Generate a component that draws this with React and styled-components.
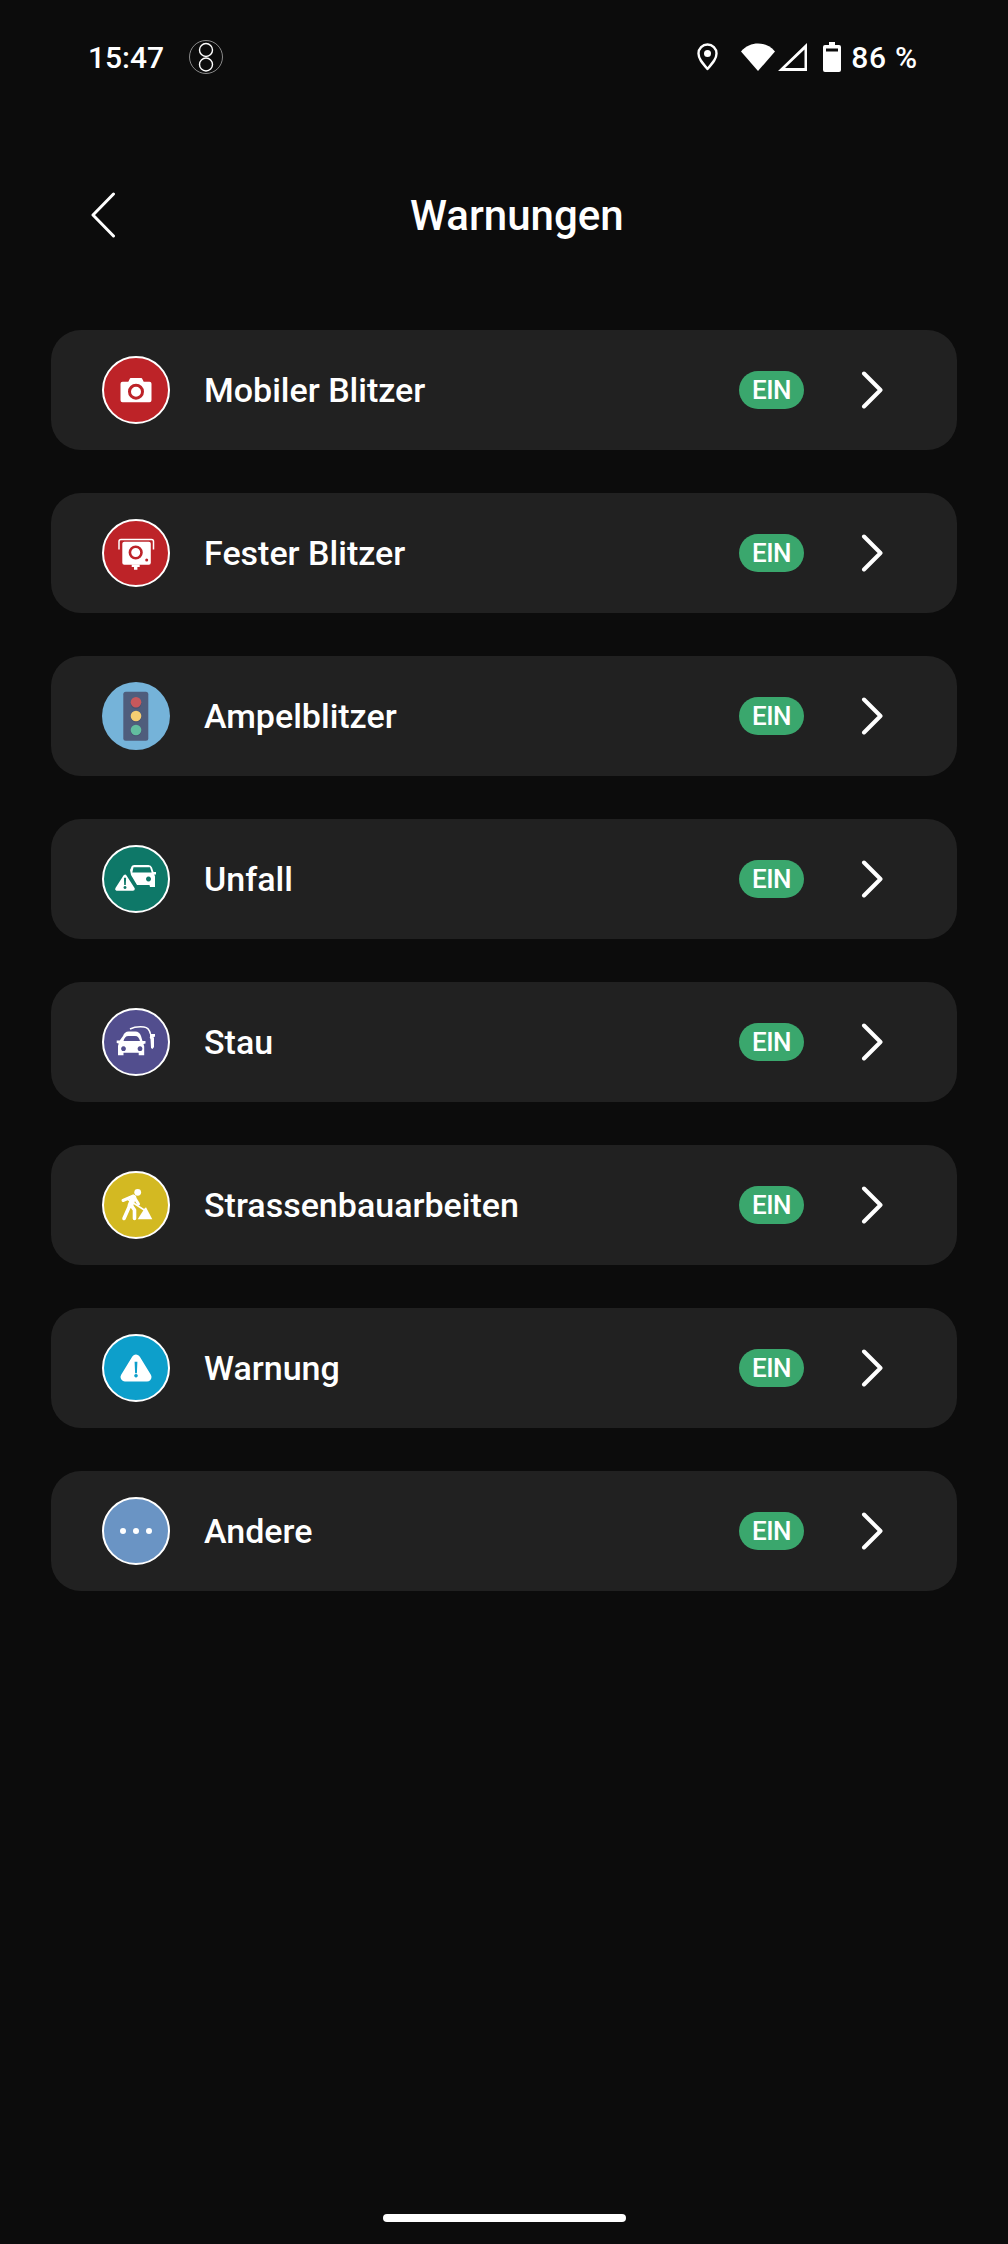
import React from 'react';
import styled, { createGlobalStyle } from 'styled-components';

const Global = createGlobalStyle`
  html, body { margin: 0; padding: 0; background: #0c0c0c; }
  body { font-family: Roboto, "Liberation Sans", sans-serif; color: #fff; }
`;

const Screen = styled.div`
  width: 1008px;
  height: 2244px;
  background: #0c0c0c;
  display: flex;
  flex-direction: column;
  overflow: hidden;
`;

const StatusBar = styled.div`
  height: 40px;
  margin-top: 37px;
  padding: 0 90px 0 88px;
  display: flex;
  align-items: center;
  justify-content: space-between;
  font-size: 30px;
  font-weight: 500;
`;

const StatusGroup = styled.div`
  display: flex;
  align-items: center;
`;

const Clock = styled.span`
  margin-right: 25px;
`;

const Percent = styled.span`
  letter-spacing: 0.8px;
`;

const StatusIcon = styled.svg`
  flex: none;
  margin-right: ${p => p.$after || 0}px;
`;

const Header = styled.div`
  height: 60px;
  margin-top: 108px;
  padding-left: 90px;
  display: flex;
  align-items: center;
  font-size: 42px;
  font-weight: 500;
`;

const BackIcon = styled.svg`
  flex: none;
  margin-right: 294px;
`;

const List = styled.div`
  margin: 85px 51px 0;
  display: flex;
  flex-direction: column;
  gap: 43px;
`;

const Row = styled.div`
  height: 120px;
  background: #212121;
  border-radius: 30px;
  display: flex;
  align-items: center;
  padding: 0 74px 0 51px;
`;

const Badge = styled.div`
  width: 68px;
  height: 68px;
  box-sizing: border-box;
  border-radius: 50%;
  background: ${p => p.$bg};
  border: ${p => (p.$plain ? 'none' : '2px solid #fff')};
  flex: none;
  overflow: hidden;
  display: flex;
`;

const Label = styled.span`
  margin-left: 34px;
  flex: 1;
  font-size: 34px;
  font-weight: 500;
`;

const Pill = styled.span`
  width: 65px;
  height: 38px;
  border-radius: 19px;
  background: #3aa76d;
  display: flex;
  align-items: center;
  justify-content: center;
  font-size: 26px;
  font-weight: 500;
  letter-spacing: -0.5px;
  margin-right: 57px;
`;

const HomeBar = styled.div`
  width: 243px;
  height: 8px;
  border-radius: 4px;
  background: #fff;
  margin: auto auto 22px;
`;

const W = '#fff';
const RED = '#bd2328';
const TEAL = '#0e7868';
const PURPLE = '#524e8e';

const Icons = {
  camera: (
    <svg width="64" height="64" viewBox="0 0 64 64">
      <path fill={W} d="M18.500 23.700h5.800l1.500-3a1 1 0 0 1 1-.7h10.400a1 1 0 0 1 1 .7l1.500 3h5.800a2 2 0 0 1 2 2v16.600a2 2 0 0 1-2 2H18.500a2 2 0 0 1-2-2V25.700a2 2 0 0 1 2-2z" />
      <circle cx="32" cy="33.700" r="6.500" fill="none" stroke={RED} strokeWidth="3" />
    </svg>
  ),
  fixed: (
    <svg width="64" height="64" viewBox="0 0 64 64">
      <path fill="none" stroke={W} strokeWidth="1.500" d="M15 28.500V20.500a2 2 0 0 1 2-2h30.500a2 2 0 0 1 2 2v8" />
      <rect x="18.300" y="20.800" width="28.500" height="23" rx="2" fill={W} />
      <circle cx="31.700" cy="31.500" r="5.800" fill="none" stroke={RED} strokeWidth="2.600" />
      <circle cx="42.700" cy="39" r="1.500" fill={RED} />
      <path fill={W} d="M27.700 43.500h8v2.500h-2.300v2.800h-3.400V46h-2.300z" />
    </svg>
  ),
  unfall: (
    <svg width="64" height="64" viewBox="0 0 64 64">
      <path fill={W} d="M27 21a3.500 3.500 0 0 1 3.500-3h14a4 4 0 0 1 3.500 2.500l1.500 4.500h2.500v2.500h-1.700l.7 2v10.500h-5l-.5-2H33l-6-10-1-5z" />
      <path fill={TEAL} d="M29.500 20.300h16.500l1.700 5.200H28.300zM44.500 29.500a2.500 2.500 0 1 0 .01 0z" />
      <path fill={W} stroke={TEAL} strokeWidth="8" strokeLinejoin="round" d="M21 29.500 13 42h16z" />
      <path fill={W} stroke={W} strokeWidth="3.600" strokeLinejoin="round" d="M21 29.500 13 42h16z" />
      <path fill={TEAL} d="M19.900 30.800h2.200l-.3 7.200h-1.600zM21 39a1.500 1.500 0 1 0 .01 0z" />
    </svg>
  ),
  stau: (
    <svg width="64" height="64" viewBox="0 0 64 64">
      <path fill="none" stroke={W} strokeWidth="1.500" d="M26 19c4-2 9-2.500 14-2 3.500.3 5.500 3 6.500 7" />
      <path fill={W} d="M46 24h5v2.500l-1.500.7.5 1V37l-1.500 2-1.500-1-.5-9-1-1.500h.5z" />
      <path fill={W} d="M19 26c1-3 3-4.500 5.500-4.500h7c2.500 0 4.500 1.500 5.500 4.500l1.500 5h3v2.500l-2 .5.7 2.500v8.800h-5.500v-2.500H19.500v2.500H14V36l.7-2.500-2-.5v-2.500h3z" />
      <path fill={PURPLE} d="M19.500 31c.8-3 2-5 5-5h6.500c3 0 4.200 2 5 5zM19.500 36.300a2.400 2.400 0 1 0 .01 0zM36 36.300a2.400 2.400 0 1 0 .01 0z" />
    </svg>
  ),
  road: (
    <svg width="64" height="64" viewBox="0 0 64 64">
      <circle cx="33.700" cy="19.300" r="3.400" fill={W} />
      <g fill="none" stroke={W} strokeLinecap="round" strokeLinejoin="round">
        <path strokeWidth="3" d="M19 27.500 29.500 23l5 8" />
        <path strokeWidth="5.500" d="M29.500 24.500 26.500 32" />
        <path strokeWidth="3.600" d="M26 32 20 45.500M27 32l3.500 5v8.500" />
        <path strokeWidth="1.500" d="M24 26.500 41 37.500" />
      </g>
      <path fill={W} d="M33.700 46.300 40.500 35.500l1.500-1.200 6.300 12z" />
    </svg>
  ),
  warn: (
    <svg width="64" height="64" viewBox="0 0 64 64">
      <path fill={W} stroke={W} strokeWidth="9" strokeLinejoin="round" d="M32 23 21 41h22z" />
      <path fill="#0d9fcb" d="M30.600 25.700h2.800l-.5 11.600h-1.800zM32 37.900a1.800 1.800 0 1 0 .01 0z" />
    </svg>
  ),
  more: (
    <svg width="64" height="64" viewBox="0 0 64 64">
      <circle cx="19" cy="32" r="3" fill={W} />
      <circle cx="32" cy="32" r="3" fill={W} />
      <circle cx="45" cy="32" r="3" fill={W} />
    </svg>
  ),
  light: (
    <svg width="68" height="68" viewBox="0 0 68 68">
      <rect x="21.300" y="9.700" width="25" height="49" rx="2.500" fill="#4f5d7c" />
      <circle cx="34" cy="21.500" r="5.300" fill="#465270" />
      <circle cx="34" cy="35" r="5.300" fill="#465270" />
      <circle cx="34" cy="49" r="5.300" fill="#465270" />
      <circle cx="34" cy="20.300" r="5.300" fill="#c7585c" />
      <circle cx="34" cy="34" r="5.300" fill="#f5cd72" />
      <circle cx="34" cy="48" r="5.300" fill="#62bd9f" />
    </svg>
  ),
};

const rows = [
  ['Mobiler Blitzer', RED, 'camera'],
  ['Fester Blitzer', RED, 'fixed'],
  ['Ampelblitzer', '#75b3d9', 'light', true],
  ['Unfall', TEAL, 'unfall'],
  ['Stau', PURPLE, 'stau'],
  ['Strassenbauarbeiten', '#d3b922', 'road'],
  ['Warnung', '#0d9fcb', 'warn'],
  ['Andere', '#6a94c4', 'more'],
];

export default function App() {
  return (
    <Screen>
      <Global />
      <StatusBar>
        <StatusGroup>
          <Clock>15:47</Clock>
          <StatusIcon width="34" height="34" viewBox="0 0 34 34">
            <circle cx="17" cy="17" r="16.500" fill="none" stroke="#aaa" strokeWidth="0.8" />
            <circle cx="17" cy="10" r="6.500" fill="none" stroke="#fff" strokeWidth="1.400" />
            <circle cx="17" cy="24.500" r="6.500" fill="none" stroke="#fff" strokeWidth="1.400" />
          </StatusIcon>
        </StatusGroup>
        <StatusGroup>
          <StatusIcon $after={23} width="21" height="28" viewBox="0 0 21 28">
            <path fill="none" stroke="#fff" strokeWidth="2.400" strokeLinejoin="round" d="M10.500 26C5 19.500 1.500 15.500 1.500 10.500a9 9 0 0 1 18 0c0 5-3.500 9-9 15.500z" />
            <circle cx="10.500" cy="10.500" r="3.500" fill="#fff" />
          </StatusIcon>
          <StatusIcon $after={3} width="34" height="28" viewBox="0 0 34 28">
            <path fill="#fff" d="M0 8.500C4.500 3 11 .500 17 .500S29.500 3 34 8.500L17 28z" />
          </StatusIcon>
          <StatusIcon $after={16} width="29" height="28" viewBox="0 0 29 28">
            <path fillRule="evenodd" fill="#fff" d="M29 0v28H0zM26.500 6.500 7 25h19.500z" />
          </StatusIcon>
          <StatusIcon $after={10} width="18" height="30" viewBox="0 0 18 30">
            <path fillRule="evenodd" fill="#fff" d="M6 0h6v3h4a2 2 0 0 1 2 2v23a2 2 0 0 1-2 2H2a2 2 0 0 1-2-2V5a2 2 0 0 1 2-2h4zM3 6.500v3h12v-3z" />
          </StatusIcon>
          <Percent>86 %</Percent>
        </StatusGroup>
      </StatusBar>
      <Header>
        <BackIcon width="26" height="46" viewBox="0 0 26 46">
          <path fill="none" stroke="#fff" strokeWidth="3" strokeLinecap="round" strokeLinejoin="round" d="M23.500 2 3 23l20.500 21" />
        </BackIcon>
        Warnungen
      </Header>
      <List>
        {rows.map(([name, bg, icon, plain]) => (
          <Row key={name}>
            <Badge $bg={bg} $plain={plain}>{Icons[icon]}</Badge>
            <Label>{name}</Label>
            <Pill>EIN</Pill>
            <svg width="22" height="38" viewBox="0 0 22 38">
              <path fill="none" stroke="#fff" strokeWidth="4" strokeLinecap="round" strokeLinejoin="round" d="M3 2.500 19.500 19 3 35.500" />
            </svg>
          </Row>
        ))}
      </List>
      <HomeBar />
    </Screen>
  );
}
